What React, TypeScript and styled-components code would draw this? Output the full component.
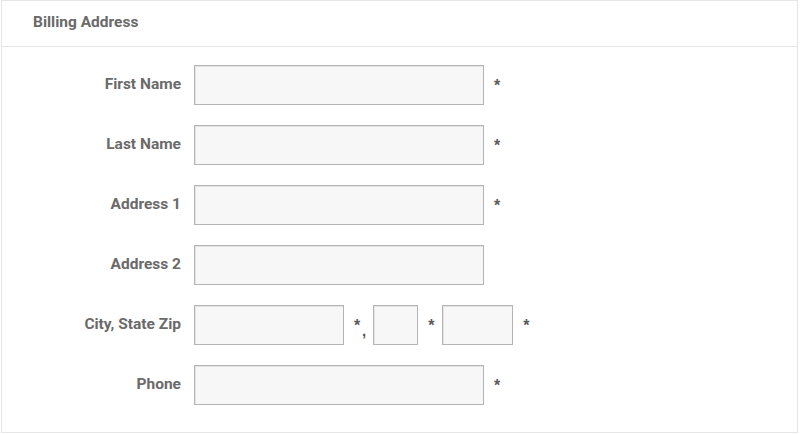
import styled, { createGlobalStyle } from "styled-components";

const GlobalStyle = createGlobalStyle`
  body {
    margin: 0;
    background: #ffffff;
    font-family: Roboto, "Liberation Sans", Arial, sans-serif;
  }
`;

type Field = { label: string; required?: boolean };

const fields: Field[] = [
  { label: "First Name", required: true },
  { label: "Last Name", required: true },
  { label: "Address 1", required: true },
  { label: "Address 2" },
];

const App: React.FC = () => {
  return (
    <>
      <GlobalStyle />
      <Panel>
        <Header>Billing Address</Header>
        <Body>
          {fields.map((f) => (
            <Row key={f.label}>
              <Label>{f.label}</Label>
              <Controls>
                <Input $width={290} />
                {f.required && <Star>*</Star>}
              </Controls>
            </Row>
          ))}
          <Row>
            <Label>City, State Zip</Label>
            <Controls>
              <Input $width={150} />
              <Star>*</Star>
              <Comma>,</Comma>
              <Input $width={45} />
              <Star>*</Star>
              <Input $width={71} />
              <Star>*</Star>
            </Controls>
          </Row>
          <Row>
            <Label>Phone</Label>
            <Controls>
              <Input $width={290} />
              <Star>*</Star>
            </Controls>
          </Row>
        </Body>
      </Panel>
    </>
  );
};

const Panel = styled.section`
  box-sizing: border-box;
  margin: 0 1px 0 1px;
  width: 797px;
  height: 433px;
  border: 1px solid #e6e6e6;
  background: #ffffff;
`;

const Header = styled.h2`
  box-sizing: border-box;
  margin: 0;
  height: 46px;
  padding: 12px 0 0 31px;
  border-bottom: 1px solid #e6e6e6;
  font-size: 15.5px;
  font-weight: 700;
  color: #6a6a6a;
`;

const Body = styled.div`
  display: flex;
  flex-direction: column;
  gap: 20px;
  padding: 18px 0 0 0;
`;

const Row = styled.div`
  display: grid;
  grid-template-columns: 179px auto;
  column-gap: 13px;
  align-items: center;
  height: 40px;
`;

const Label = styled.label`
  text-align: right;
  font-size: 15.5px;
  font-weight: 700;
  color: #6a6a6a;
  position: relative;
  top: -1px;
`;

const Controls = styled.div`
  display: flex;
  align-items: center;
`;

const Input = styled.input<{ $width: number }>`
  box-sizing: border-box;
  width: ${({ $width }) => $width}px;
  height: 40px;
  margin: 0;
  padding: 0 8px;
  border: 1px solid #b4b4b4;
  box-shadow: inset 1px 1px 0 #e4e4e4;
  background: #f7f7f7;
  font-family: inherit;
  font-size: 13px;
  outline: none;
`;

const Star = styled.span`
  margin: 0 6px 0 10px;
  width: 8px;
  font-family: "Liberation Sans", Arial, sans-serif;
  font-size: 16px;
  font-weight: 700;
  color: #5a5a5a;
  line-height: 1;
  position: relative;
  top: 1px;
`;

const Comma = styled.span`
  margin: 0 7px 0 -6px;
  font-family: "Liberation Sans", Arial, sans-serif;
  font-size: 15px;
  font-weight: 700;
  color: #555555;
  position: relative;
  top: 5px;
`;

export default App;
